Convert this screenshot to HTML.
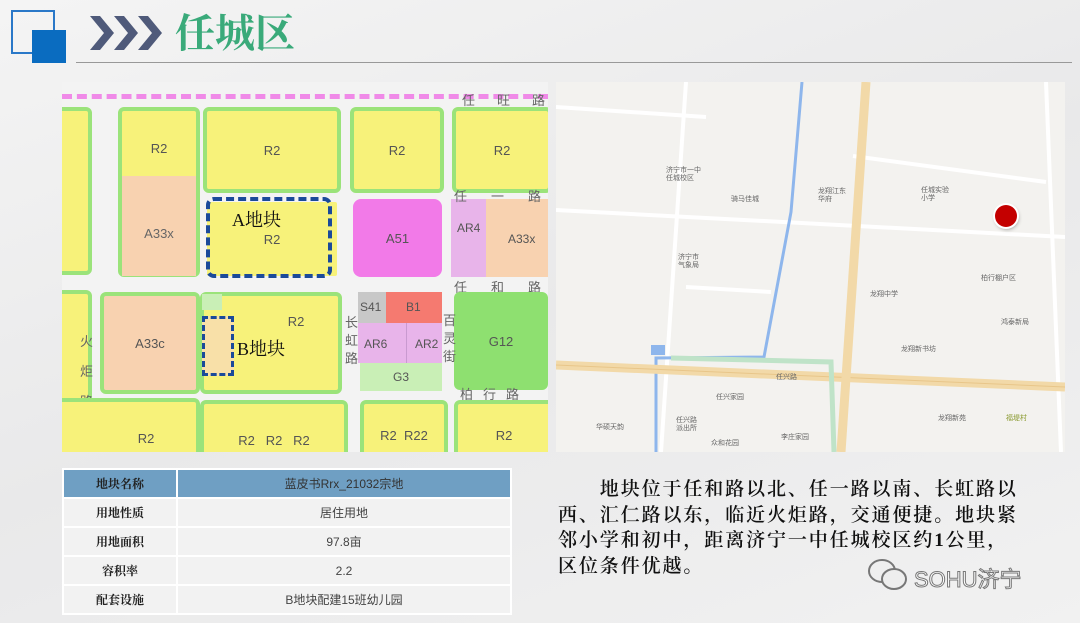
<!DOCTYPE html>
<html><head><meta charset="utf-8"><style>
body{margin:0;width:1080px;height:623px;overflow:hidden;background:linear-gradient(160deg,#f4f4f4 0%,#e9e9ea 50%,#f1f1f1 100%);font-family:"Liberation Sans","Noto Sans CJK SC",sans-serif;position:relative}
.a{position:absolute}
.y{background:#f7f27a;}
.blk{position:absolute;box-sizing:border-box;border:4px solid #9be37a;border-radius:6px;color:#555;font-size:13px;display:flex;align-items:center;justify-content:center}
.t{position:absolute;font-size:13px;color:#666;white-space:nowrap}
table{border-collapse:collapse}
td{border:2px solid #fff;text-align:center;font-size:12px;color:#444;height:27px;padding:0;background:#f2f2f2}
td.h{font-weight:bold;font-family:"Noto Serif CJK SC",serif;color:#222}
.m{position:absolute;font-size:7px;color:#666;line-height:8px;white-space:nowrap}
</style></head><body>
<!-- header -->
<div class="a" style="left:11px;top:10px;width:40px;height:40px;border:2px solid #2a78c8"></div>
<div class="a" style="left:32px;top:30px;width:34px;height:33px;background:#0a6cc0"></div>
<svg class="a" style="left:88px;top:12px" width="80" height="42"><g fill="#4f5a7a"><polygon points="2,4 12,4 26,21 12,38 2,38 16,21"/><polygon points="26,4 36,4 50,21 36,38 26,38 40,21"/><polygon points="50,4 60,4 74,21 60,38 50,38 64,21"/></g></svg>
<div class="a" style="left:175px;top:8px;font-size:40px;font-weight:bold;color:#3aaa7a;font-family:'Noto Serif CJK SC',serif;line-height:46px">任城区</div>
<div class="a" style="left:76px;top:62px;width:996px;height:1px;background:#999"></div>

<!-- left map -->
<div class="a" style="left:62px;top:82px;width:486px;height:370px;background:#f3f3f3;overflow:hidden">
 <div class="a" style="left:0;top:12px;width:486px;height:0;border-top:5px dashed #f08ae8"></div>
 <div class="t" style="left:400px;top:8px;letter-spacing:22px">任旺路</div>
 <div class="blk y" style="left:-10px;top:25px;width:40px;height:168px"></div>
 <div class="blk y" style="left:-10px;top:208px;width:40px;height:170px"></div>
 <div class="blk y" style="left:56px;top:25px;width:82px;height:170px;align-items:flex-start;padding-top:30px">R2</div>
 <div class="a" style="left:60px;top:94px;width:74px;height:100px;background:#f8d2b0;color:#666;font-size:13px;text-align:center;padding-top:50px;box-sizing:border-box">A33x</div>
 <div class="blk y" style="left:141px;top:25px;width:138px;height:86px">R2</div>
 <div class="blk y" style="left:141px;top:116px;width:138px;height:82px;border-color:#f3f3f3">R2</div>
 <div class="a" style="left:144px;top:115px;width:126px;height:81px;border:4px dashed #1a4a9a;box-sizing:border-box;border-radius:8px"></div>
 <div class="a" style="left:170px;top:124px;font-size:18px;color:#111;font-family:'Liberation Serif','Noto Serif CJK SC',serif">A地块</div>
 <div class="blk y" style="left:288px;top:25px;width:94px;height:86px">R2</div>
 <div class="a" style="left:291px;top:117px;width:89px;height:78px;background:#f27ae8;border-radius:8px;color:#555;font-size:13px;display:flex;align-items:center;justify-content:center">A51</div>
 <div class="blk y" style="left:390px;top:25px;width:100px;height:86px">R2</div>
 <div class="a" style="left:389px;top:117px;width:35px;height:78px;background:#e8b4ea;color:#555;font-size:12px;padding:22px 0 0 6px;box-sizing:border-box">AR4</div>
 <div class="a" style="left:424px;top:117px;width:62px;height:78px;background:#f8d2b0;color:#555;font-size:12px;padding:33px 0 0 22px;box-sizing:border-box">A33x</div>
 <div class="t" style="left:392px;top:104px;letter-spacing:24px">任一路</div>
 <div class="t" style="left:392px;top:195px;letter-spacing:24px">任和路</div>
 <div class="blk" style="left:38px;top:210px;width:100px;height:102px;background:#f8d2b0">A33c</div>
 <div class="blk y" style="left:138px;top:210px;width:142px;height:102px;align-items:flex-start;padding-top:18px;padding-left:50px">R2</div>
 <div class="a" style="left:140px;top:212px;width:20px;height:16px;background:#c9efb6"></div>
 <div class="a" style="left:140px;top:234px;width:32px;height:60px;background:#f8e0a8;border:3px dashed #1a4a9a;box-sizing:border-box"></div>
 <div class="a" style="left:175px;top:253px;font-size:18px;color:#111;font-family:'Liberation Serif','Noto Serif CJK SC',serif">B地块</div>
 <div class="a" style="left:296px;top:210px;width:28px;height:31px;background:#c8c8c8;font-size:12px;color:#555;padding:8px 0 0 2px;box-sizing:border-box">S41</div>
 <div class="a" style="left:324px;top:210px;width:56px;height:31px;background:#f57a70;font-size:12px;color:#555;padding:8px 0 0 20px;box-sizing:border-box">B1</div>
 <div class="a" style="left:296px;top:241px;width:48px;height:40px;background:#e8b4ea;font-size:12px;color:#555;padding:14px 0 0 6px;box-sizing:border-box">AR6</div>
 <div class="a" style="left:344px;top:241px;width:36px;height:40px;background:#e8b4ea;font-size:12px;color:#555;padding:14px 0 0 8px;box-sizing:border-box;border-left:1px solid #c99ad0">AR2</div>
 <div class="a" style="left:298px;top:281px;width:82px;height:28px;background:#c9efb6;font-size:12px;color:#555;text-align:center;padding-top:7px;box-sizing:border-box">G3</div>
 <div class="a" style="left:392px;top:210px;width:94px;height:98px;background:#8ee070;border-radius:6px;font-size:13px;color:#555;display:flex;align-items:center;justify-content:center">G12</div>
 <div class="t" style="left:398px;top:302px;letter-spacing:10px">柏行路</div>
 <div class="t" style="left:18px;top:245px;width:14px;line-height:30px;white-space:normal">火炬路</div>
 <div class="t" style="left:283px;top:232px;width:14px;line-height:18px;white-space:normal">长虹路</div>
 <div class="t" style="left:381px;top:230px;width:14px;line-height:18px;white-space:normal">百灵街</div>
 <div class="blk y" style="left:-10px;top:316px;width:148px;height:70px;padding-top:10px;padding-left:40px">R2</div>
 <div class="blk y" style="left:138px;top:318px;width:148px;height:70px;padding-top:10px">R2 &nbsp; R2 &nbsp; R2</div>
 <div class="blk y" style="left:298px;top:318px;width:88px;height:70px">R2 &nbsp;R22</div>
 <div class="blk y" style="left:392px;top:318px;width:100px;height:70px">R2</div>
</div>

<!-- right map -->
<div class="a" style="left:556px;top:82px;width:509px;height:370px;background:#f3f2ef;overflow:hidden">
 <svg width="509" height="370" class="a" style="left:0;top:0">
  <g stroke="#fff" stroke-width="4" fill="none">
   <line x1="0" y1="128" x2="509" y2="155"/><line x1="0" y1="25" x2="150" y2="35"/>
   <line x1="130" y1="0" x2="105" y2="370"/><line x1="297" y1="74" x2="490" y2="100"/>
   <line x1="490" y1="0" x2="505" y2="370"/><line x1="130" y1="205" x2="215" y2="210"/>
  </g>
  <path d="M246 0 L235 130 L208 275 L100 276 L100 370" stroke="#8eb6ec" stroke-width="3" fill="none"/>
  <rect x="95" y="263" width="14" height="10" fill="#8eb6ec"/>
  <path d="M0 283 L509 305" stroke="#f2d9a8" stroke-width="9"/>
  <path d="M0 283 L509 305" stroke="#e8c68a" stroke-width="1"/>
  <path d="M310 0 L285 370" stroke="#f2d9a8" stroke-width="9"/>
  <path d="M115 276 L275 280 L278 370" stroke="#bfe3c8" stroke-width="5" fill="none"/>
 </svg>
 <div class="a" style="left:439px;top:123px;width:22px;height:22px;border-radius:50%;background:#c40000;box-shadow:0 0 0 2px #fff,1px 2px 4px #888"></div>
 <div class="m" style="left:110px;top:85px">济宁市一中<br>任城校区</div>
 <div class="m" style="left:175px;top:114px">骑马佳城</div>
 <div class="m" style="left:262px;top:106px">龙翔江东<br>华府</div>
 <div class="m" style="left:365px;top:105px">任城实验<br>小学</div>
 <div class="m" style="left:122px;top:172px">济宁市<br>气象局</div>
 <div class="m" style="left:314px;top:209px">龙翔中学</div>
 <div class="m" style="left:425px;top:193px">柏行棚户区</div>
 <div class="m" style="left:445px;top:237px">鸿泰新局</div>
 <div class="m" style="left:345px;top:264px">龙翔新书坊</div>
 <div class="m" style="left:220px;top:292px">任兴路</div>
 <div class="m" style="left:160px;top:312px">任兴家园</div>
 <div class="m" style="left:40px;top:342px">华硕天韵</div>
 <div class="m" style="left:120px;top:335px">任兴路<br>派出所</div>
 <div class="m" style="left:155px;top:358px">众和花园</div>
 <div class="m" style="left:225px;top:352px">李庄家园</div>
 <div class="m" style="left:382px;top:333px">龙翔新苑</div>
 <div class="m" style="color:#8a9a30;left:450px;top:333px">福堤村</div>
</div>

<!-- table -->
<table class="a" style="left:62px;top:468px;width:450px">
 <tr><td class="h" style="width:112px;background:#6f9fc3;height:22px">地块名称</td><td style="background:#6f9fc3;color:#333">蓝皮书Rrx_21032宗地</td></tr>
 <tr><td class="h">用地性质</td><td>居住用地</td></tr>
 <tr><td class="h">用地面积</td><td>97.8亩</td></tr>
 <tr><td class="h">容积率</td><td>2.2</td></tr>
 <tr><td class="h">配套设施</td><td>B地块配建15班幼儿园</td></tr>
</table>

<!-- paragraph -->
<div class="a" style="left:558px;top:477px;font-size:19px;line-height:25.5px;color:#111;font-family:'Liberation Serif','Noto Serif CJK SC',serif;font-weight:600;letter-spacing:1.9px;white-space:nowrap">&emsp;&emsp;地块位于任和路以北、任一路以南、长虹路以<br>西、汇仁路以东，临近火炬路，交通便捷。地块紧<br>邻小学和初中，距离济宁一中任城校区约1公里，<br>区位条件优越。</div>

<!-- watermark -->
<svg class="a" style="left:866px;top:558px" width="44" height="34"><g fill="none" stroke="#777" stroke-width="2"><ellipse cx="16" cy="13" rx="13" ry="11"/><ellipse cx="28" cy="21" rx="12" ry="10" fill="#eee"/></g></svg>
<div class="a" style="left:914px;top:562px;font-size:22px;color:#fff;-webkit-text-stroke:1px #777">SOHU济宁</div>
</body></html>
